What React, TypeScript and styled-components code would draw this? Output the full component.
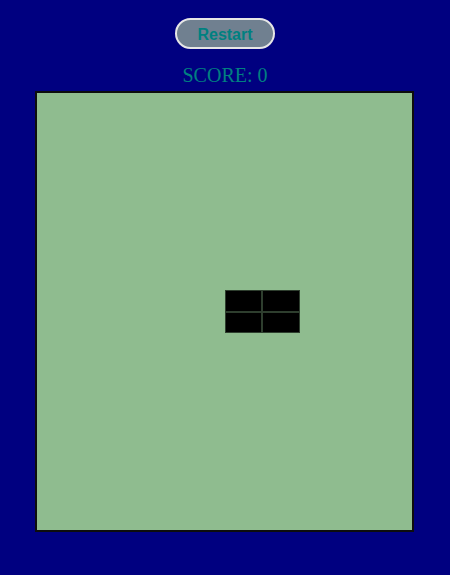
import React, { useState } from "react";
import styled, { createGlobalStyle } from "styled-components";

const COLS = 10;
const ROWS = 20;

const GlobalStyle = createGlobalStyle`
  html, body {
    background: #000080;
  }
  body {
    margin: 8px;
    font-family: "Liberation Serif", serif;
  }
`;

const Page = styled.div`
  display: flex;
  flex-direction: column;
  align-items: center;
`;

const RestartButton = styled.button`
  margin-top: 10px;
  width: 100px;
  height: 31px;
  padding: 2px 0 0;
  border: 2px solid #e6e6e6;
  border-radius: 16px;
  background: #708090;
  color: #008080;
  font-family: "Liberation Sans", Arial, sans-serif;
  font-weight: bold;
  font-size: 16px;
  cursor: pointer;
`;

const Score = styled.div`
  margin-top: 15px;
  color: #008080;
  font-size: 20px;
  line-height: 23px;
`;

const Board = styled.div`
  margin-top: 4px;
  align-self: flex-start;
  margin-left: 27px;
  box-sizing: border-box;
  width: 379px;
  height: 441px;
  border: 2px solid #0d0d0d;
  background: #8fbc8f;
  display: grid;
  grid-template-columns: repeat(${COLS}, 1fr);
  grid-template-rows: repeat(${ROWS}, 1fr);
`;

const Cell = styled.div<{ $col: number; $row: number }>`
  grid-column: ${({ $col }) => $col + 1};
  grid-row: ${({ $row }) => $row + 1};
  box-sizing: border-box;
  background: #000;
  border: 1px solid #2e3e2e;
`;

const App: React.FC = () => {
  const [score, setScore] = useState(0);
  const snake = [
    { x: 5, y: 9 },
    { x: 6, y: 9 },
    { x: 5, y: 10 },
    { x: 6, y: 10 },
  ];

  return (
    <Page>
      <GlobalStyle />
      <RestartButton onClick={() => setScore(0)}>Restart</RestartButton>
      <Score>SCORE: {score}</Score>
      <Board>
        {snake.map((s, i) => (
          <Cell key={i} $col={s.x} $row={s.y} />
        ))}
      </Board>
    </Page>
  );
};

export default App;
